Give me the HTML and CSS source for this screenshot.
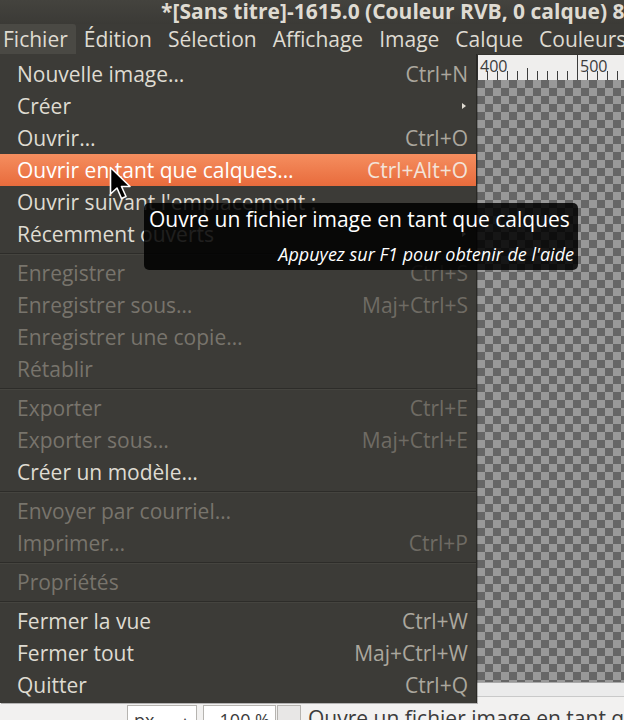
FILE: index.html
```html
<!DOCTYPE html>
<html lang="fr">
<head>
<meta charset="utf-8">
<title>GIMP</title>
<link rel="stylesheet" href="styles.css">
</head>
<body>
<div class="window">
  <header class="titlebar">*[Sans titre]-1615.0 (Couleur RVB, 0 calque) 800x600 – GIMP</header>
  <nav class="menubar">
    <span class="mb-item active">Fichier</span>
    <span class="mb-item">Édition</span>
    <span class="mb-item">Sélection</span>
    <span class="mb-item">Affichage</span>
    <span class="mb-item">Image</span>
    <span class="mb-item">Calque</span>
    <span class="mb-item">Couleurs</span>
  </nav>
  <main class="workspace">
    <div class="ruler">
      <svg class="ruler-svg" width="624" height="25" viewBox="0 0 624 25">
        <g stroke="#3c3c3c" stroke-width="1">
          <line x1="477.5" y1="0" x2="477.5" y2="25"/>
          <line x1="487.5" y1="16" x2="487.5" y2="25"/>
          <line x1="497.5" y1="16" x2="497.5" y2="25"/>
          <line x1="507.5" y1="16" x2="507.5" y2="25"/>
          <line x1="517.5" y1="16" x2="517.5" y2="25"/>
          <line x1="527.5" y1="13" x2="527.5" y2="25"/>
          <line x1="537.5" y1="16" x2="537.5" y2="25"/>
          <line x1="547.5" y1="16" x2="547.5" y2="25"/>
          <line x1="557.5" y1="16" x2="557.5" y2="25"/>
          <line x1="567.5" y1="16" x2="567.5" y2="25"/>
          <line x1="577.5" y1="0" x2="577.5" y2="25"/>
          <line x1="587.5" y1="16" x2="587.5" y2="25"/>
          <line x1="597.5" y1="16" x2="597.5" y2="25"/>
          <line x1="607.5" y1="16" x2="607.5" y2="25"/>
          <line x1="617.5" y1="16" x2="617.5" y2="25"/>
        </g>
        <g class="ruler-label">
          <text x="480" y="17">400</text>
          <text x="580" y="17">500</text>
        </g>
      </svg>
    </div>
    <div class="canvas"></div>
    <div class="hscroll"></div>
    <footer class="statusbar">
      <div class="combo"><span>px</span><span class="up">▴</span></div>
      <div class="zoombox">100 %</div>
      <div class="spin"><span class="up">▴</span></div>
      <div class="status-text">Ouvre un fichier image en tant que calques</div>
    </footer>
  </main>

  <div class="menu">
    <div class="mi"><span>Nouvelle image…</span><span class="sc">Ctrl+N</span></div>
    <div class="mi"><span>Créer</span><span class="sub"></span></div>
    <div class="mi"><span>Ouvrir…</span><span class="sc">Ctrl+O</span></div>
    <div class="mi hl"><span>Ouvrir en tant que calques…</span><span class="sc">Ctrl+Alt+O</span></div>
    <div class="mi"><span>Ouvrir suivant l'emplacement :</span></div>
    <div class="mi"><span>Récemment ouverts</span><span class="sub"></span></div>
    <div class="sep"></div>
    <div class="mi off"><span>Enregistrer</span><span class="sc">Ctrl+S</span></div>
    <div class="mi off"><span>Enregistrer sous…</span><span class="sc">Maj+Ctrl+S</span></div>
    <div class="mi off"><span>Enregistrer une copie…</span></div>
    <div class="mi off"><span>Rétablir</span></div>
    <div class="sep"></div>
    <div class="mi off"><span>Exporter</span><span class="sc">Ctrl+E</span></div>
    <div class="mi off"><span>Exporter sous…</span><span class="sc">Maj+Ctrl+E</span></div>
    <div class="mi"><span>Créer un modèle…</span></div>
    <div class="sep"></div>
    <div class="mi off"><span>Envoyer par courriel…</span></div>
    <div class="mi off"><span>Imprimer…</span><span class="sc">Ctrl+P</span></div>
    <div class="sep"></div>
    <div class="mi off"><span>Propriétés</span></div>
    <div class="sep"></div>
    <div class="mi"><span>Fermer la vue</span><span class="sc">Ctrl+W</span></div>
    <div class="mi"><span>Fermer tout</span><span class="sc">Maj+Ctrl+W</span></div>
    <div class="mi"><span>Quitter</span><span class="sc">Ctrl+Q</span></div>
  </div>

  <div class="tooltip">
    <div class="tt-main">Ouvre un fichier image en tant que calques</div>
    <div class="tt-help">Appuyez sur F1 pour obtenir de l'aide</div>
  </div>

  <svg class="cursor" width="24" height="36" viewBox="0 0 24 36">
    <path d="M1.5 1.5 L1.5 28 L8 22 L12.5 32.5 L17 30.5 L12.5 20.5 L21 20.5 Z" fill="#000" stroke="#fff" stroke-width="1.6" stroke-linejoin="round"/>
  </svg>
</div>
</body>
</html>
```

FILE: styles.css
```css
* { box-sizing: border-box; margin: 0; padding: 0; }

html, body {
  width: 624px;
  height: 720px;
  overflow: hidden;
}

body {
  background: #3c3b37;
  font-family: "Open Sans", "Noto Sans", "DejaVu Sans", sans-serif;
}

.window {
  position: relative;
  width: 624px;
  height: 720px;
  overflow: hidden;
  display: flex;
  flex-direction: column;
}

.titlebar {
  flex: none;
  height: 24px;
  padding-left: 161px;
  background: linear-gradient(#44433e, #3b3a36);
  color: #dfdbd2;
  font-size: 21px;
  font-weight: 700;
  line-height: 23px;
  white-space: nowrap;
  overflow: hidden;
}

.menubar {
  flex: none;
  height: 30px;
  display: flex;
  margin-left: -5px;
  background: #3c3b37;
  white-space: nowrap;
}

.mb-item {
  padding: 0 8px;
  color: #dfdbd2;
  font-size: 21px;
  line-height: 30px;
}

.mb-item.active {
  background: #4a4944;
  border-radius: 3px 3px 0 0;
}

.workspace {
  flex: 1;
  display: flex;
  flex-direction: column;
  background: #f2f1f0;
  min-height: 0;
}

.ruler {
  flex: none;
  height: 26px;
  border-top: 1px solid #34332f;
  background: #efeeed;
}

.ruler-svg { display: block; }

.ruler-label text {
  font-family: "Open Sans", "Noto Sans", sans-serif;
  font-size: 16px;
  fill: #3c3c3c;
}

.canvas {
  flex: none;
  height: 602px;
  background: repeating-conic-gradient(#999999 0 25%, #666666 0 50%) 13px 0 / 16px 16px;
}

.hscroll {
  flex: none;
  height: 15px;
  background: #ebebeb;
  border-top: 1px solid #a9a9a9;
  border-bottom: 1px solid #c9c9c9;
}

.statusbar {
  flex: 1;
  display: flex;
  align-items: flex-start;
  padding: 8px 0 0 127px;
  background: #f2f1f0;
  color: #3c3c3c;
  white-space: nowrap;
}

.combo, .zoombox, .spin {
  flex: none;
  height: 28px;
  border: 1px solid #b6b4b0;
  background: #ffffff;
  font-size: 18px;
  line-height: 28px;
}

.combo {
  width: 70px;
  display: flex;
  justify-content: space-between;
  padding: 0 8px 0 6px;
  margin-right: 6px;
}

.zoombox {
  width: 73px;
  text-align: right;
  padding-right: 5px;
}

.spin {
  width: 24px;
  margin-left: 1px;
  background: #e8e7e6;
  text-align: center;
}

.up { font-size: 12px; color: #3c3c3c; }

.status-text {
  flex: none;
  font-size: 21px;
  line-height: 26px;
  padding-left: 7px;
}

/* Dropdown menu */
.menu {
  position: absolute;
  top: 54px;
  left: 0;
  width: 477px;
  padding: 4px 0 2px;
  background: #3c3b37;
  border-right: 1px solid #2a2925;
  box-shadow: 1px 1px 0 rgba(0, 0, 0, 0.25);
}

.mi {
  height: 32px;
  display: flex;
  justify-content: space-between;
  align-items: center;
  padding: 0 8px 0 17px;
  color: #dfdbd2;
  font-size: 21px;
  line-height: 32px;
  white-space: nowrap;
}

.mi .sc { color: #aba79e; }

.mi.off { color: #78746c; }
.mi.off .sc { color: #6f6b64; }

.mi.hl {
  background: linear-gradient(#f58e5f, #e86b3c);
  color: #ffffff;
}
.mi.hl .sc { color: #f3e3d9; }

.sub {
  width: 0;
  height: 0;
  margin-right: 2px;
  border-left: 4px solid #dfdbd2;
  border-top: 3px solid transparent;
  border-bottom: 3px solid transparent;
}

.sep {
  height: 2px;
  margin: 3px 0 2px;
  border-top: 1px solid #2d2c29;
  border-bottom: 1px solid #45443f;
}

/* Tooltip */
.tooltip {
  position: absolute;
  left: 144px;
  top: 203px;
  width: 434px;
  height: 67px;
  padding: 2px 4px 0 5px;
  background: rgba(0, 0, 0, 0.86);
  border-radius: 5px;
  color: #ffffff;
  white-space: nowrap;
}

.tt-main {
  font-size: 21px;
  line-height: 29px;
}

.tt-help {
  margin-top: 9px;
  font-size: 18px;
  font-style: italic;
  line-height: 22px;
  text-align: right;
}

.cursor {
  position: absolute;
  left: 109px;
  top: 166px;
}
```
